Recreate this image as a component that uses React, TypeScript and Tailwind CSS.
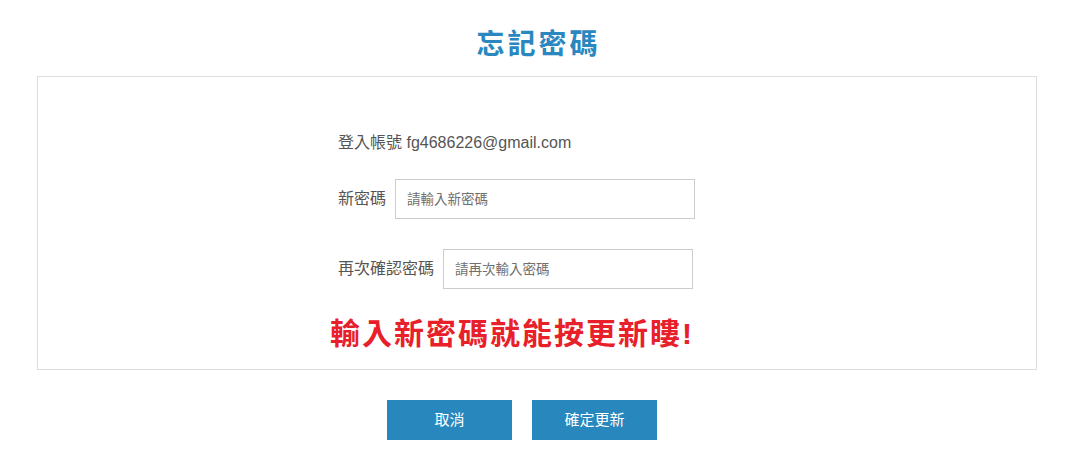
export default function App() {
  const font = { fontFamily: '"Liberation Sans", "Noto Sans CJK TC", sans-serif' };
  return (
    <div className="w-[1069px] h-[469px] bg-white" style={font}>
      <div className="w-[1000px] ml-[37px] flex flex-col items-center pt-[27px]">
        <h1 className="text-[28px] leading-[36px] font-bold text-[#2a87bf] tracking-[3px] pl-[3px]">忘記密碼</h1>
      </div>
      <div className="w-[1000px] ml-[37px] mt-[13px] h-[294px] border border-[#dddddd] flex flex-col">
        <div className="pl-[300px] pt-[56px] flex flex-col text-[16px] text-[#555555]">
          <div className="h-[20px] leading-[20px]">登入帳號 fg4686226@gmail.com</div>
          <div className="mt-[26px] flex items-center">
            <span className="mr-[9px] leading-[20px]">新密碼</span>
            <input
              placeholder="請輸入新密碼"
              className="w-[300px] h-[40px] border border-[#cccccc] px-[11px] text-[13.5px] text-[#555] placeholder:text-[#707070] outline-none"
            />
          </div>
          <div className="mt-[30px] flex items-center">
            <span className="mr-[9px] leading-[20px]">再次確認密碼</span>
            <input
              placeholder="請再次輸入密碼"
              className="w-[250px] h-[40px] border border-[#cccccc] px-[11px] text-[13.5px] text-[#555] placeholder:text-[#707070] outline-none"
            />
          </div>
        </div>
        <div className="pl-[292px] mt-[26px] text-[30px] leading-[38px] font-bold text-[#e8202a] tracking-[2px]">
          輸入新密碼就能按更新瞜!
        </div>
      </div>
      <div className="mt-[30px] flex gap-[20px] pl-[387px]">
        <button className="w-[125px] h-[40px] bg-[#2887bd] text-white text-[15px]">取消</button>
        <button className="w-[125px] h-[40px] bg-[#2887bd] text-white text-[15px]">確定更新</button>
      </div>
    </div>
  );
}
